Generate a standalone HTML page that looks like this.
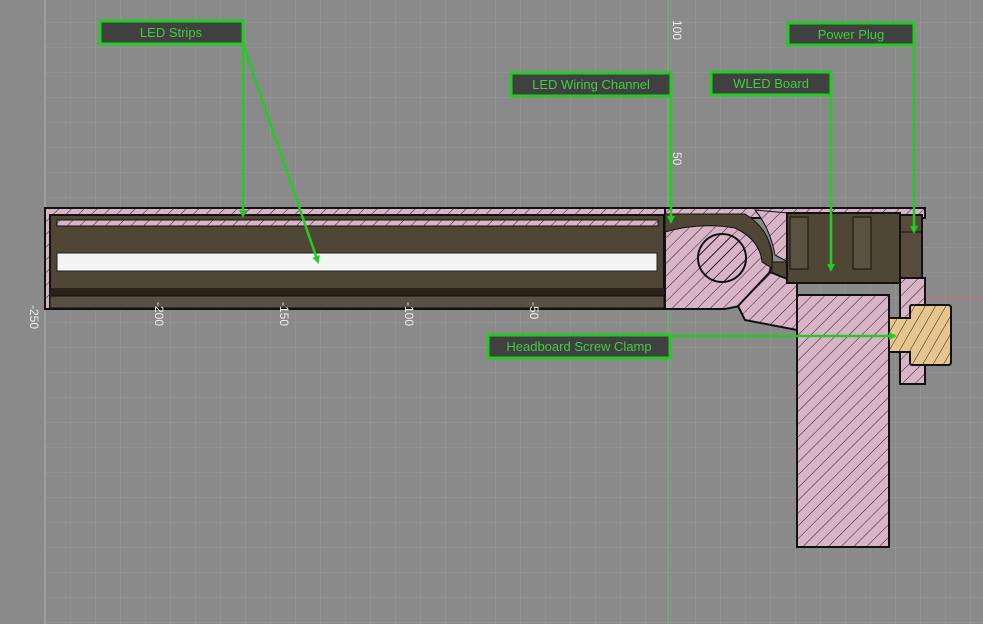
<!DOCTYPE html>
<html><head><style>body{margin:0;background:#8a8a8a;position:relative}svg{display:block}
#c{position:absolute;left:697px;top:233px;width:46px;height:46px;border-radius:50%;border:2px solid #111;background:repeating-linear-gradient(-45deg,#d9b3c6 0 5px,#222 5px 6px,#d9b3c6 6px 9px)}</style></head><body>
<svg width="983" height="624" xmlns="http://www.w3.org/2000/svg" font-family="Liberation Sans, sans-serif">
<defs>
<pattern id="g" width="25" height="25" patternUnits="userSpaceOnUse" x="45" y="22"><path d="M0 0V25M0 0H25" stroke="#9a9a9a" stroke-width="1" fill="none"/></pattern>
<pattern id="h" width="9" height="9" patternUnits="userSpaceOnUse" patternTransform="rotate(45)"><rect x="-1" y="-1" width="11" height="11" fill="#d9b3c6"/><path d="M0 -1V10" stroke="#222" stroke-width="1"/></pattern>
<pattern id="t" width="9" height="9" patternUnits="userSpaceOnUse" patternTransform="rotate(30)"><rect x="-1" y="-1" width="11" height="11" fill="#e6c58e"/><path d="M0 -1V10" stroke="#222" stroke-width="1"/></pattern>
<marker id="a" markerWidth="8" markerHeight="8" refX="6" refY="4" orient="auto" markerUnits="userSpaceOnUse"><path d="M0 0L8 4L0 8Z" fill="#22cc22"/></marker>
</defs>
<rect width="983" height="624" fill="#8a8a8a"/>
<rect x="45" y="0" width="938" height="624" fill="url(#g)"/>
<line x1="45" y1="0" x2="45" y2="624" stroke="#b0b0b0"/>
<line x1="668" y1="0" x2="668" y2="624" stroke="#4fd04f" stroke-width="1"/>
<line x1="925" y1="297" x2="983" y2="297" stroke="#d07070"/>
<rect x="45" y="208" width="620" height="101" fill="url(#h)" stroke="#111" stroke-width="2"/>
<rect x="50" y="215" width="614" height="93" fill="#4f4636" stroke="#111" stroke-width="2"/>
<rect x="57" y="220" width="601" height="6" fill="url(#h)" stroke="#111"/>
<rect x="57" y="253" width="600" height="18" fill="#f4f4f4" stroke="#222"/>
<rect x="50" y="288" width="614" height="8" fill="#2a2218"/>
<rect x="50" y="296" width="614" height="12" fill="#5a5040" stroke="#111"/>
<rect x="665" y="208" width="260" height="10" fill="url(#h)" stroke="#111" stroke-width="2"/>
<path d="M665 215H735Q768 225 772 255Q772 285 745 305L725 309H665Z" fill="url(#h)" stroke="#111" stroke-width="2"/>
<path d="M665 232Q700 222 735 228Q760 240 762 262L772 268Q775 232 745 214H665Z" fill="#4f4636" stroke="#111"/>
<path d="M755 210L788 213V262L775 255Q770 228 755 210Z" fill="url(#h)" stroke="#111"/>
<path d="M772 262L787 262V282L772 278Z" fill="#4f4636" stroke="#111"/>
<path d="M738 306L770 272L797 283V330L745 320Z" fill="url(#h)" stroke="#111" stroke-width="2"/>
<rect x="787" y="213" width="113" height="70" fill="#4f4636" stroke="#111" stroke-width="2"/>
<rect x="790" y="217" width="18" height="52" fill="#5b5140" stroke="#111"/>
<rect x="853" y="217" width="18" height="52" fill="#5b5140" stroke="#111"/>
<rect x="900" y="215" width="22" height="68" fill="#574c3b" stroke="#111" stroke-width="2"/>
<line x1="900" y1="232" x2="922" y2="232" stroke="#111"/>
<rect x="797" y="295" width="92" height="252" fill="url(#h)" stroke="#111" stroke-width="2"/>
<rect x="900" y="278" width="25" height="40" fill="url(#h)" stroke="#111" stroke-width="2"/>
<rect x="900" y="352" width="25" height="32" fill="url(#h)" stroke="#111" stroke-width="2"/>
<path d="M889 318H910V307Q910 305 912 305H948Q951 305 951 308V362Q951 365 948 365H912Q910 365 910 362V352H889Z" fill="url(#t)" stroke="#111" stroke-width="2"/>
<g fill="#eee" font-size="12">
<text transform="translate(30,305) rotate(90)">-250</text>
<text transform="translate(155,302) rotate(90)">-200</text>
<text transform="translate(280,302) rotate(90)">-150</text>
<text transform="translate(405,302) rotate(90)">-100</text>
<text transform="translate(530,302) rotate(90)">-50</text>
<text transform="translate(673,20) rotate(90)">100</text>
<text transform="translate(673,152) rotate(90)">50</text>
</g>
<g stroke="#22cc22" stroke-width="2.5" fill="none">
<path d="M243 44V216" marker-end="url(#a)"/>
<path d="M243 44L318 262" marker-end="url(#a)"/>
<path d="M671 95V222" marker-end="url(#a)"/>
<path d="M831 95V270" marker-end="url(#a)"/>
<path d="M914 44V232" marker-end="url(#a)"/>
<path d="M670 336H895" marker-end="url(#a)"/>
</g>
<g stroke="#22cc22" stroke-width="3" fill="#404040">
<rect x="100" y="21" width="143" height="23"/>
<rect x="511" y="73" width="160" height="23"/>
<rect x="711" y="72" width="120" height="23"/>
<rect x="788" y="23" width="126" height="22"/>
<rect x="488" y="335" width="182" height="23"/>
</g>
<g fill="#3fcf3f" font-size="13" text-anchor="middle">
<text x="171" y="37">LED Strips</text>
<text x="591" y="89">LED Wiring Channel</text>
<text x="771" y="88">WLED Board</text>
<text x="851" y="39">Power Plug</text>
<text x="579" y="351">Headboard Screw Clamp</text>
</g>
</svg>
<div id="c"></div>
</body></html>
